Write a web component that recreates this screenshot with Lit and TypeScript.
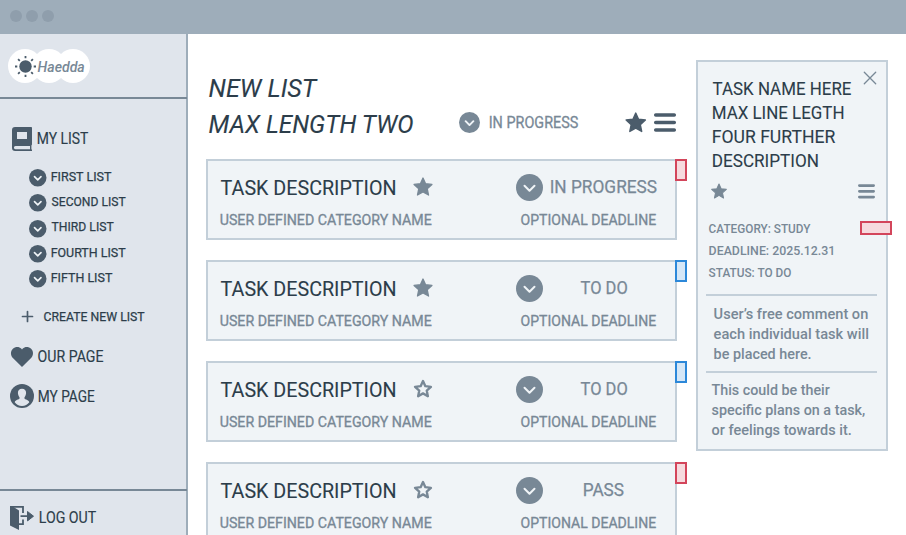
import { LitElement, html, css, svg } from "lit";
import { customElement, property, query } from "lit/decorators.js";
import { styleMap } from "lit/directives/style-map.js";

/** One line of text whose ink spans exactly `span` pixels. */
@customElement("fit-text")
class FitText extends LitElement {
  static styles = css`
    :host { display: block; flex: none; white-space: nowrap; }
    .box { height: 100%; }
    .ink { display: inline-block; transform-origin: 0 50%; }
  `;
  @property({ type: Number }) span = 0;
  @property() text = "";
  @query(".ink") ink!: HTMLElement;

  render() {
    return html`<div class="box" style=${styleMap({ width: `${this.span}px` })}><span class="ink">${this.text}</span></div>`;
  }

  updated() {
    const ctx = document.createElement("canvas").getContext("2d")!;
    const cs = getComputedStyle(this);
    ctx.font = `${cs.fontStyle} ${cs.fontWeight} ${cs.fontSize} ${cs.fontFamily}`;
    const m = ctx.measureText(this.text);
    const scale = this.span / (m.actualBoundingBoxRight + m.actualBoundingBoxLeft);
    this.ink.style.transform = `translateX(${m.actualBoundingBoxLeft * scale - 0.4}px) scaleX(${scale})`;
  }
}

const line = (text: string, span: number, cls = "") =>
  html`<fit-text class=${cls} .text=${text} .span=${span}></fit-text>`;

const STAR = "M12 1.2 15.2 8.3 23 9.2 17.2 14.4 18.8 22.2 12 18.3 5.2 22.2 6.8 14.4 1 9.2 8.8 8.3Z";

const star = (cls: string, filled = true) => html`
  <svg class="star ${cls}" viewBox="0 0 24 23.4">
    ${filled
      ? svg`<path d=${STAR} fill="currentColor" stroke="currentColor" stroke-width="1.6" stroke-linejoin="round"/>`
      : svg`<path d="M12 2.4 14.9 8.8 21.8 9.6 16.6 14.2 18 21.2 12 17.7 6 21.2 7.4 14.2 2.2 9.6 9.1 8.8Z" fill="none" stroke="currentColor" stroke-width="2.9" stroke-linejoin="round"/>`}
  </svg>`;

const chevron = (cls: string) => html`
  <svg class="chev ${cls}" viewBox="0 0 27 27">
    <circle cx="13.5" cy="13.5" r="13.5" fill="currentColor"/>
    <path class="tick" d="M8.5 11.8 13.5 16.8 18.5 11.8" fill="none" stroke-linecap="round" stroke-linejoin="round"/>
  </svg>`;

const menu = (cls: string) => html`
  <svg class="menu ${cls}" viewBox="0 0 22 19">
    <path d="M1.7 2h18.6M1.7 9.5h18.6M1.7 17h18.6" stroke="currentColor" stroke-width="3.5" stroke-linecap="round"/>
  </svg>`;

interface Task { status: string; span: number; starred: boolean; tag: string; }

const TASKS: Task[] = [
  { status: "IN PROGRESS", span: 106.5, starred: true, tag: "red" },
  { status: "TO DO", span: 46.5, starred: true, tag: "blue" },
  { status: "TO DO", span: 46.5, starred: false, tag: "blue" },
  { status: "PASS", span: 40.5, starred: false, tag: "red" },
];

const LISTS: [string, number][] = [
  ["FIRST LIST", 60.3], ["SECOND LIST", 74.3], ["THIRD LIST", 62.3],
  ["FOURTH LIST", 74.3], ["FIFTH LIST", 61],
];

@customElement("app-root")
class AppRoot extends LitElement {
  static styles = css`
    :host {
      display: flex; flex-direction: column; height: 535px; overflow: hidden;
      background: #fff; font-family: Roboto, "Liberation Sans", sans-serif;
      --ink: #2c3d4a; --dark: #4b5c6b; --mid: #788896; --steel: #9eadba;
      --edge: #c3cfd9; --panel: #f0f4f7; --side: #e0e5ec;
      color: var(--ink);
    }
    * { box-sizing: border-box; }
    svg { display: block; flex: none; overflow: visible; }
    .tick { stroke: var(--panel); stroke-width: 2; }
    .s .tick, .m .tick { stroke-width: 2.5; }
    .topbar { flex: none; height: 34px; background: var(--steel); display: flex; gap: 4px; padding: 10px; }
    .dot { width: 12px; height: 12px; border-radius: 50%; background: #8f9eac; }
    .body { flex: 1; display: flex; min-height: 0; align-items: flex-start; }

    .side { width: 188px; height: 501px; background: var(--side); border-right: 2px solid var(--steel); display: flex; flex-direction: column; flex: none; }
    .brand { height: 65px; border-bottom: 2px solid var(--mid); padding: 15px 0 0 8px; margin-right: -1px; flex: none; }
    .logo { display: grid; width: 82px; height: 34px; }
    .logo > * { grid-area: 1 / 1; }
    .clouds { width: 82px; height: 34px; }
    .name { margin: 9px 0 0 30.3px; height: 18px; line-height: 18px; font-size: 15.5px; font-style: italic; font-weight: 500; color: var(--mid); }
    .nav { flex: 1; display: flex; flex-direction: column; }
    .row { display: flex; align-items: center; height: 24px; flex: none; }
    .row fit-text { height: 20px; line-height: 20px; font-size: 15.7px; -webkit-text-stroke: .15px currentColor; }
    .icon { color: var(--dark); }
    .mylist { margin: 28px 0 0 12px; gap: 6.4px; }
    .mylist svg { margin-top: -1px; }
    .mylist fit-text { margin-top: -1px; }
    .lists { margin: 18px 0 0 29px; display: flex; flex-direction: column; gap: 7.2px; }
    .sub { display: flex; align-items: center; height: 18px; gap: 5.3px; }
    .row.create fit-text, .sub fit-text { height: 16px; line-height: 16px; font-size: 13px; -webkit-text-stroke: .25px currentColor; }
    .sub fit-text { margin-top: -2px; }
    .s { width: 17.5px; height: 17.5px; }
    .create { margin: 17px 0 0 22px; gap: 10.7px; }
    .our { margin: 16px 0 0 11px; gap: 4.9px; }
    .my { margin: 16px 0 0 10px; gap: 5.4px; }
    .my svg { margin-top: -1px; }
    .out { height: 46px; border-top: 2px solid var(--mid); padding: 15px 0 0 10px; margin-right: -1px; flex: none; }
    .out .row { gap: 5.9px; }

    .main { width: 471px; margin-left: 18px; flex: none; }
    .head { height: 125px; display: flex; padding: 36px 1px 0 3px; }
    .titles { width: 249.8px; }
    .titles fit-text { height: 36px; line-height: 36px; font-size: 26.5px; font-style: italic; -webkit-text-stroke: .1px currentColor; }
    .tools { flex: 1; height: 24px; margin-top: 41px; display: flex; align-items: center; }
    .m { width: 21px; height: 21px; color: var(--mid); margin: -1.5px 9.5px 0 0; }
    .state { height: 20px; line-height: 20px; font-size: 15.6px; -webkit-text-stroke: .3px currentColor; color: var(--mid); margin: 0 46.8px 0 .7px; }
    .big { width: 21.5px; height: 20.5px; color: var(--dark); margin: -1px 7px 0 0; }
    .m2 { width: 22px; height: 19px; color: var(--dark); margin-top: -1.5px; }

    .cards { display: flex; flex-direction: column; gap: 20px; }
    .card { position: relative; height: 81px; background: var(--panel); border: 2px solid var(--edge); padding: 13px 18px 0 12.5px; color: var(--mid); }
    .top { display: flex; align-items: center; height: 27px; }
    .task { height: 26px; line-height: 26px; font-size: 21px; -webkit-text-stroke: .1px currentColor; color: var(--ink); margin-right: 17.3px; margin-top: 1px; }
    .c { width: 20px; height: 19px; margin-top: -2.5px; }
    .l { width: 27px; height: 27px; margin-left: 83px; }
    .status { flex: 1; display: flex; justify-content: center; margin: -1.5px -.5px 0 7.6px; }
    .status fit-text { height: 24px; line-height: 24px; font-size: 18.5px; -webkit-text-stroke: .25px currentColor; }
    .low { display: flex; justify-content: space-between; margin-top: 9px; }
    .low fit-text { height: 20px; line-height: 20px; font-size: 15.3px; -webkit-text-stroke: .35px currentColor; }
    .low .due { margin-top: .4px; }
    .tag { position: absolute; top: -2px; right: -12px; width: 12px; height: 22px; border: 2px solid; }
    .red { border-color: #d3455b; background: #f6dade; }
    .blue { border-color: #2c88d9; background: #d5e7f7; }

    .detail { position: relative; width: 192px; height: 391px; margin: 26px 0 0 19px; background: var(--panel); border: 2px solid var(--edge); padding: 14.7px 9px 0 8px; color: var(--mid); flex: none; }
    .x { position: absolute; top: 10px; right: 10px; width: 12px; height: 12px; }
    .name4 { margin-left: 7px; color: var(--ink); }
    .name4 fit-text { height: 24px; line-height: 24px; font-size: 19px; -webkit-text-stroke: .1px currentColor; }
    .tools2 { display: flex; justify-content: space-between; align-items: center; height: 16px; margin: 10.3px 2px 0 5px; }
    .d { width: 16px; height: 16px; }
    .m3 { width: 17px; height: 14.6px; }
    .meta { margin: 19.5px 0 0 3px; }
    .meta fit-text { height: 22px; line-height: 22px; font-size: 12.8px; font-weight: 500; }
    .detail .wide { top: 159px; right: -6px; width: 32px; height: 14px; }
    .note { border-top: 2px solid var(--edge); height: 77px; padding: 8px 0 0 8px; }
    .note.first { margin-top: 9.5px; }
    .note.second { padding: 7px 0 0 6px; }
    .note fit-text { height: 20px; line-height: 20px; font-size: 15px; font-weight: 500; }
  `;

  card(t: Task) {
    return html`<div class="card">
      <div class="top">
        ${line("TASK DESCRIPTION", 175, "task")}
        ${star("c", t.starred)}
        ${chevron("l")}
        <div class="status">${line(t.status, t.span)}</div>
      </div>
      <div class="low">
        ${line("USER DEFINED CATEGORY NAME", 211.5)}
        ${line("OPTIONAL DEADLINE", 135.8, "due")}
      </div>
      <div class="tag ${t.tag}"></div>
    </div>`;
  }

  render() {
    return html`
      <header class="topbar"><i class="dot"></i><i class="dot"></i><i class="dot"></i></header>
      <div class="body">
        <aside class="side">
          <div class="brand"><div class="logo">
            <svg class="clouds icon" viewBox="0 0 82 34">
              <g fill="#fff"><circle cx="17" cy="17" r="17"/><circle cx="41" cy="17" r="17"/><circle cx="65" cy="17" r="17"/></g>
              <circle cx="17.5" cy="17.5" r="6.2" fill="currentColor"/>
              <path d="M17.5 7v2.3M17.5 25.7V28M7 17.5h2.3M25.7 17.5H28M10.1 10.1l1.7 1.7M23.2 23.2l1.7 1.7M24.9 10.1l-1.7 1.7M11.8 23.2l-1.7 1.7" stroke="currentColor" stroke-width="1.8"/>
            </svg>
            ${line("Haedda", 47, "name")}
          </div></div>
          <nav class="nav">
            <div class="row mylist">
              <svg class="icon" width="20" height="24" viewBox="0 0 20 24">
                <path fill="currentColor" fill-rule="evenodd" d="M3 0H19.2a.8.8 0 0 1 .8.8V17.5L19.4 18.4V22.2L20 22.8V24H3.2A3.2 3.2 0 0 1 0 20.8V3A3 3 0 0 1 3 0ZM5 5V12H15V5ZM3.5 19A1.6 1.6 0 0 0 3.5 22.2H18V19Z"/>
              </svg>
              ${line("MY LIST", 50.5)}
            </div>
            <div class="lists">
              ${LISTS.map(([t, w]) => html`<div class="sub"><span class="icon">${chevron("s")}</span>${line(t, w)}</div>`)}
            </div>
            <div class="row create">
              <svg class="icon" width="11" height="11" viewBox="0 0 11 11"><path d="M5.5.5v10M.5 5.5h10" stroke="currentColor" stroke-width="1.7" stroke-linecap="round"/></svg>
              ${line("CREATE NEW LIST", 101.3)}
            </div>
            <div class="row our">
              <svg class="icon" width="22" height="20" viewBox="0 0 22 20"><path fill="currentColor" d="M11 20 1.9 11C-.7 8.2-.6 4 1.9 1.7 4.3-.6 8.3-.6 10.2 1.6L11 2.5 11.8 1.6C13.7-.6 17.7-.6 20.1 1.7 22.6 4 22.7 8.2 20.1 11Z"/></svg>
              ${line("OUR PAGE", 66)}
            </div>
            <div class="row my">
              <svg class="icon" width="24" height="24" viewBox="0 0 24 24">
                <circle cx="12" cy="12" r="12" fill="currentColor"/>
                <path fill="#e0e5ec" d="M12 4.7C14.7 4.7 16.2 6.5 16.1 9 16 11 15.2 12.2 14.5 13.2V14.6C15 15.8 18.5 15.7 19.3 18.3 17.6 20.7 15 22 12 22S6.4 20.7 4.7 18.3C5.5 15.7 9 15.8 9.5 14.6V13.2C8.8 12.2 8 11 7.9 9 7.8 6.5 9.3 4.7 12 4.7Z"/>
              </svg>
              ${line("MY PAGE", 56.3)}
            </div>
          </nav>
          <div class="out"><div class="row">
            <svg class="icon" width="24" height="24" viewBox="0 0 24 24">
              <path fill="currentColor" d="M0 0H2L9 4.5V24L0 19.5Z"/>
              <path fill="none" stroke="currentColor" stroke-width="1.8" d="M1 .9H13V7M13 13.5V18.1H8M10.5 10.2H18"/>
              <path fill="currentColor" stroke="currentColor" stroke-linejoin="round" d="M17.5 5.5 23.5 10.2 17.5 14.9Z"/>
            </svg>
            ${line("LOG OUT", 56.3)}
          </div></div>
        </aside>

        <main class="main">
          <div class="head">
            <div class="titles">${line("NEW LIST", 109.3)}${line("MAX LENGTH TWO", 204.8)}</div>
            <div class="tools">
              ${chevron("m")}${line("IN PROGRESS", 88.5, "state")}${star("big")}${menu("m2")}
            </div>
          </div>
          <div class="cards">${TASKS.map((t) => this.card(t))}</div>
        </main>

        <section class="detail">
          <svg class="x" viewBox="0 0 12 12"><path d="M.3.3 11.7 11.7M11.7.3.3 11.7" stroke="currentColor" stroke-width="1.3" stroke-linecap="round"/></svg>
          <div class="name4">
            ${line("TASK NAME HERE", 139)}${line("MAX LINE LEGTH", 130.5)}
            ${line("FOUR FURTHER", 123)}${line("DESCRIPTION", 105)}
          </div>
          <div class="tools2">${star("d")}${menu("m3")}</div>
          <div class="meta">
            ${line("CATEGORY: STUDY", 102)}${line("DEADLINE: 2025.12.31", 124.5)}${line("STATUS: TO DO", 83.2)}
          </div>
          <div class="tag wide red"></div>
          <div class="note first">
            ${line("User’s free comment on", 154.3)}${line("each individual task will", 154.5)}${line("be placed here.", 97.8)}
          </div>
          <div class="note second">
            ${line("This could be their", 118.8)}${line("specific plans on a task,", 153.3)}${line("or feelings towards it.", 140)}
          </div>
        </section>
      </div>
    `;
  }
}
